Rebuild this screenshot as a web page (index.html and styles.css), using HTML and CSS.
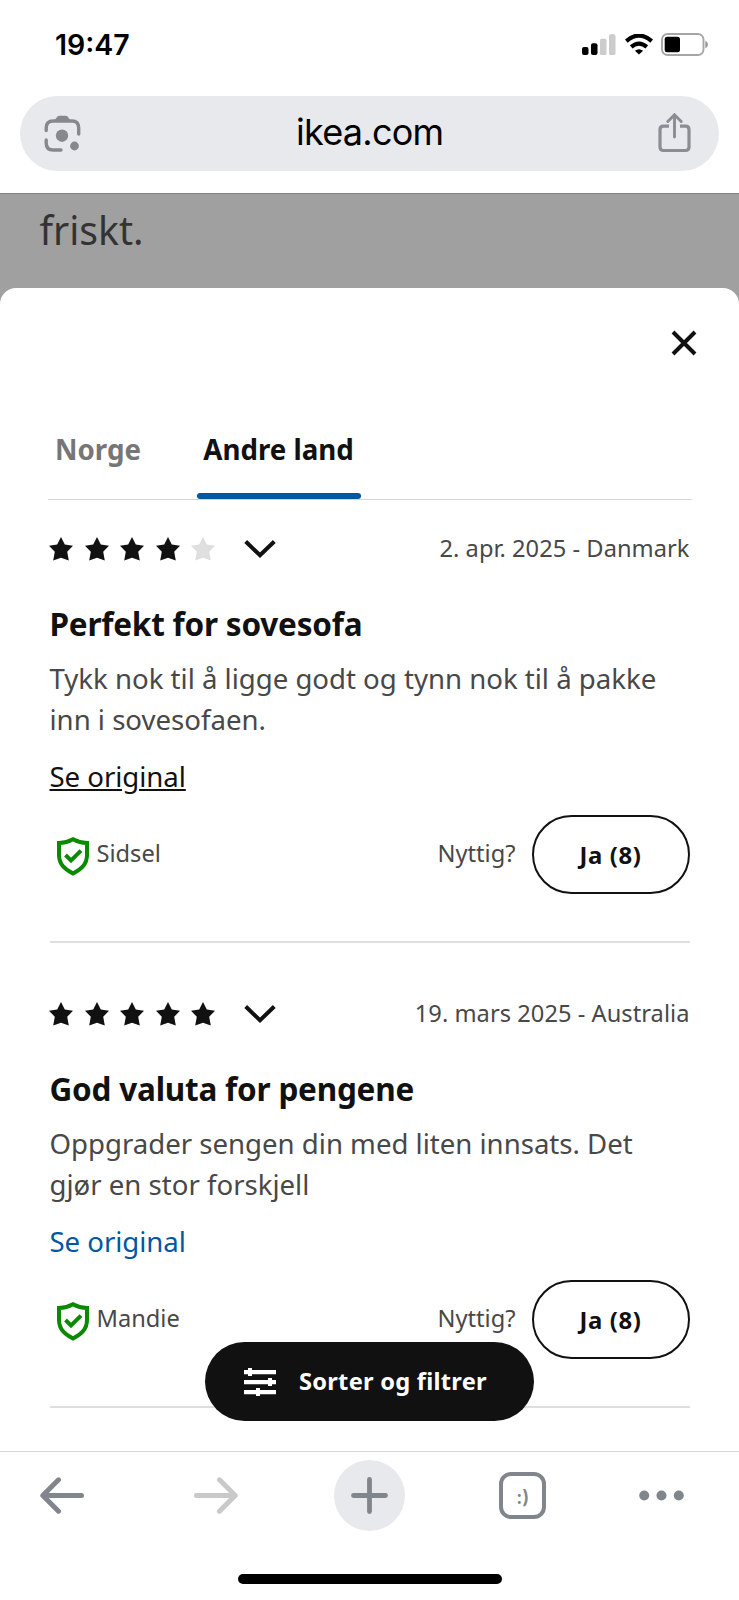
FILE: index.html
```html
<!DOCTYPE html>
<html lang="no">
<head>
<meta charset="utf-8">
<title>ikea.com</title>
<link rel="stylesheet" href="styles.css">
</head>
<body>
<svg class="defs" width="0" height="0">
  <symbol id="star" viewBox="0 0 24 24"><path d="M12 0 15.8 7.4 24 8.700 18.200 14.700 19.800 23.600 12 20.700 4.200 23.600 5.800 14.700 0 8.700 8.200 7.400Z"/></symbol>
  <symbol id="chevron" viewBox="0 0 32 20"><path d="M1.700 2.500 16 16.300 30.300 2.500" fill="none" stroke="#111" stroke-width="4"/></symbol>
  <symbol id="shield" viewBox="0 0 32 39"><path d="M16 2.200Q22.500 5.800 30 6V18C30 27 24.500 32 16 36.600 7.500 32 2 27 2 18V6Q9.500 5.800 16 2.200Z" fill="none" stroke="#0a8a00" stroke-width="4"/><path d="M8.500 18 14 23.500 24 13.700" fill="none" stroke="#0a8a00" stroke-width="3.900"/></symbol>
</svg>
<div class="phone">
  <header class="status">
    <span class="time">19:47</span>
    <div class="status-icons">
      <svg width="34" height="21" viewBox="0 0 34 21"><rect y="13" width="6.500" height="8" rx="2"/><rect x="9" y="9.300" width="6.500" height="11.700" rx="2"/><rect x="18" y="4.700" width="6.500" height="16.300" rx="1.600" fill="#ccc"/><rect x="27" y="0.200" width="6.500" height="20.800" rx="1.600" fill="#ccc"/></svg>
      <svg width="28" height="21" viewBox="0 0 28 21"><path d="M1.300 7.100Q14-3.900 26.700 7.100" fill="none" stroke="#000" stroke-width="4.200"/><path d="M6.200 12.900Q14 6.300 21.800 12.900" fill="none" stroke="#000" stroke-width="4"/><path d="M14 20.500 9.900 16.700Q14 13.700 18.100 16.700Z"/></svg>
      <svg width="47" height="23" viewBox="0 0 47 23"><rect x="1" y="1" width="41.500" height="21" rx="5.500" fill="#fff" stroke="#a6a6a6" stroke-width="1.900"/><rect x="3.700" y="3.700" width="15.300" height="15.500" rx="2.500"/><path d="M44.300 7.800Q47 9 47 11.500T44.300 15.200Z" fill="#999"/></svg>
    </div>
  </header>
  <div class="address">
    <svg class="lens" width="37" height="37" viewBox="0 0 37 37"><g fill="none" stroke="#85898d" stroke-width="3.400" stroke-linecap="round"><path d="M2.200 15.500V13Q2.200 6 9.200 6H28Q34.700 6 34.700 13V19"/><path d="M2.200 25V28Q2.200 35 9.200 35H17"/></g><path d="M10.500 5.500 13 2Q14 .800 15.500 .800H21.500Q23 .800 24 2L26.500 5.500Z" fill="#85898d"/><circle cx="18" cy="20.700" r="6.200" fill="#85898d"/><circle cx="30.500" cy="31" r="4.400" fill="#85898d"/></svg>
    <span class="url">ikea.com</span>
    <svg class="share" width="33" height="40" viewBox="0 0 33 40"><g fill="none" stroke="#8a8d91" stroke-width="3.200"><path d="M11 13.200H5.500Q2 13.200 2 16.700V34Q2 37.500 5.500 37.500H27.500Q31 37.500 31 34V16.700Q31 13.200 27.500 13.200H22"/><path d="M16.500 24V2.500M9.800 8.500 16.500 1.800 23.200 8.500" stroke-width="2.900" stroke-linecap="round"/></g></svg>
  </div>
  <div class="page">friskt.</div>
  <main class="sheet">
    <div class="sheet-top">
      <svg width="26" height="26" viewBox="0 0 26 26"><path d="M2 2 24 24M24 2 2 24" stroke="#111" stroke-width="3.900"/></svg>
    </div>
    <nav class="tabs">
      <span class="tab">Norge</span>
      <span class="tab active">Andre land</span>
    </nav>
    <article class="review">
      <div class="meta">
        <div class="stars"><svg><use href="#star"/></svg><svg><use href="#star"/></svg><svg><use href="#star"/></svg><svg><use href="#star"/></svg><svg class="off"><use href="#star"/></svg></div>
        <svg class="chevron"><use href="#chevron"/></svg>
        <span class="date">2. apr. 2025 - Danmark</span>
      </div>
      <h2>Perfekt for sovesofa</h2>
      <p>Tykk nok til å ligge godt og tynn nok til å pakke<br>inn i sovesofaen.</p>
      <a class="original pressed">Se original</a>
      <div class="foot">
        <svg class="shield"><use href="#shield"/></svg><span class="name">Sidsel</span>
        <span class="useful">Nyttig?</span><button class="yes">Ja (8)</button>
      </div>
    </article>
    <article class="review">
      <div class="meta">
        <div class="stars"><svg><use href="#star"/></svg><svg><use href="#star"/></svg><svg><use href="#star"/></svg><svg><use href="#star"/></svg><svg><use href="#star"/></svg></div>
        <svg class="chevron"><use href="#chevron"/></svg>
        <span class="date">19. mars 2025 - Australia</span>
      </div>
      <h2>God valuta for pengene</h2>
      <p>Oppgrader sengen din med liten innsats. Det<br>gjør en stor forskjell</p>
      <a class="original">Se original</a>
      <div class="foot">
        <svg class="shield"><use href="#shield"/></svg><span class="name">Mandie</span>
        <span class="useful">Nyttig?</span><button class="yes">Ja (8)</button>
      </div>
    </article>
    <button class="filter">
      <svg width="32" height="28" viewBox="0 0 32 28" fill="#fff"><path d="M0 2H32V6.200H0ZM0 12H32V16.200H0ZM0 22H32V26.200H0Z"/><path d="M4 0H8V8H4ZM24 10H28V18H24ZM12 20H16V28H12Z"/></svg>
      <span>Sorter og filtrer</span>
    </button>
  </main>
  <footer class="toolbar">
    <div class="actions">
      <svg width="44" height="37" viewBox="0 0 44 37"><path d="M41.500 18.500H3M18.500 2.800 2.800 18.500 18.500 34.200" fill="none" stroke="#80868b" stroke-width="5" stroke-linecap="round" stroke-linejoin="round"/></svg>
      <svg width="44" height="37" viewBox="0 0 44 37"><path d="M2.500 18.500H41M25.500 2.800 41.200 18.500 25.500 34.200" fill="none" stroke="#c9c9c9" stroke-width="5" stroke-linecap="round" stroke-linejoin="round"/></svg>
      <div class="plus"><svg width="37" height="37" viewBox="0 0 37 37"><path d="M18.500 2.500V34.500M2.500 18.500H34.500" stroke="#80868b" stroke-width="4.800" stroke-linecap="round"/></svg></div>
      <div class="tabcount">:)</div>
      <svg width="45" height="11" viewBox="0 0 45 11" fill="#80868b"><circle cx="5.200" cy="5.500" r="5"/><circle cx="22.500" cy="5.500" r="5"/><circle cx="39.800" cy="5.500" r="5"/></svg>
    </div>
    <div class="home"></div>
  </footer>
</div>
</body>
</html>
```
FILE: styles.css
```css
* { box-sizing: border-box; }
body { margin: 0; background: #fff; font-family: "Noto Sans", sans-serif; color: #111; }
svg { display: block; flex: none; }
.defs { position: absolute; }
.phone { width: 739px; height: 1600px; overflow: hidden; display: flex; flex-direction: column; white-space: nowrap; }
.status { height: 96px; flex: none; padding: 0 31px 8px 55px; display: flex; align-items: center; justify-content: space-between; }
.time { margin-top: 2px; font: 600 28.500px/34px Inter, sans-serif; color: #000; }
.status-icons { display: flex; align-items: center; gap: 8.500px; }
.address { flex: none; height: 75px; margin: 0 20px; padding: 0 28.500px 0 24px; border-radius: 38px; background: #e7e9ed; display: flex; align-items: center; justify-content: space-between; }
.share { margin-top: -1px; }
.url { font: 400 36px/44px Inter, sans-serif; letter-spacing: -0.750px; color: #000; margin: -4px 0 0 1px; }
.page { flex: none; height: 116px; margin-top: 22px; padding: 7px 0 0 39.500px; border-top: 1px solid #828282; background: #a0a0a0; font-size: 39.200px; line-height: 58px; color: #333; }
.sheet { position: relative; flex: none; height: 1163.400px; margin-top: -21.400px; background: #fff; border-radius: 16px 16px 0 0; padding: 0 49.500px 0 49.500px; }
.sheet-top { height: 141px; padding: 42.400px 0 0; margin-right: -7.500px; display: flex; justify-content: flex-end; align-items: flex-start; }
.tabs { display: flex; height: 71.400px; margin: 0 -2px 0 -1.500px; border-bottom: 1px solid #d5d5d5; font-weight: 700; font-size: 27.700px; line-height: 41.400px; gap: 49.200px; }
.tab { color: #767676; padding: 0 6.700px 0 7px; height: 70.400px; }
.tab.active { color: #111; position: relative; padding-left: 6.500px; }
.tab.active::after { content: ""; position: absolute; left: 0; right: 0; bottom: 0; height: 6px; border-radius: 3px; background: #0058a3; }
.review { height: 465px; border-bottom: 2px solid #dfdfdf; padding-top: 53px; }
.tabs + .review { padding-top: 31px; height: 443px; }
.meta { display: flex; align-items: center; height: 36px; }
.stars { display: flex; gap: 11.500px; margin-left: -0.500px; }
.stars svg { width: 24px; height: 24px; fill: #111; }
.stars .off { fill: #dfdfdf; }
.chevron { width: 32px; height: 20px; margin-left: 29px; }
.date { margin-left: auto; font-size: 23.650px; line-height: 35.500px; letter-spacing: 0.040px; color: #484848; }
h2 { margin: 32.500px 0 0; font-size: 31.500px; line-height: 47.300px; letter-spacing: -0.220px; font-weight: 700; }
p { margin: 11px 0 0; font-size: 27.600px; line-height: 41.400px; letter-spacing: -0.010px; color: #484848; }
.original { display: block; width: max-content; margin-top: 15.500px; font-size: 27.600px; line-height: 41.400px; letter-spacing: -0.050px; color: #0058a3; }
.pressed { color: #111; text-decoration: underline; }
.foot { display: flex; align-items: center; height: 79px; margin-top: 17px; font-size: 23.650px; line-height: 35.500px; color: #484848; }
.shield { width: 32px; height: 39px; margin: 4px 7.500px 0; }
.name, .useful { margin-top: -0.500px; }
.useful { margin-left: auto; margin-right: 16px; }
.yes { width: 158px; height: 79px; border: 2px solid #111; border-radius: 40px; background: #fff; padding: 0; font: 700 23.900px/35px "Noto Sans", sans-serif; letter-spacing: 0.650px; color: #111; }
.filter { position: absolute; left: 205px; top: 1054.400px; width: 329px; height: 79px; border: 0; border-radius: 40px; background: #111; color: #fff; padding: 0 0 0 39px; display: flex; align-items: center; gap: 23px; font: 700 23.650px/35px "Noto Sans", sans-serif; letter-spacing: 0.250px; }
.toolbar { flex: 1; border-top: 1px solid #d5d7d9; background: #fff; }
.actions { display: grid; grid-template-columns: repeat(4, 153.500px) 124px; align-items: center; justify-items: center; height: 71px; margin: 8px 0 0 -14.500px; }
.plus { width: 71px; height: 71px; border-radius: 50%; background: #e7e9ed; display: flex; align-items: center; justify-content: center; }
.tabcount { width: 47px; height: 47px; border: 4px solid #80868b; border-radius: 12px; font: 600 19px/43px Inter, sans-serif; text-align: center; color: #80868b; }
.home { width: 264px; height: 10px; margin: 43px auto 0; border-radius: 5px; background: #000; }
```
